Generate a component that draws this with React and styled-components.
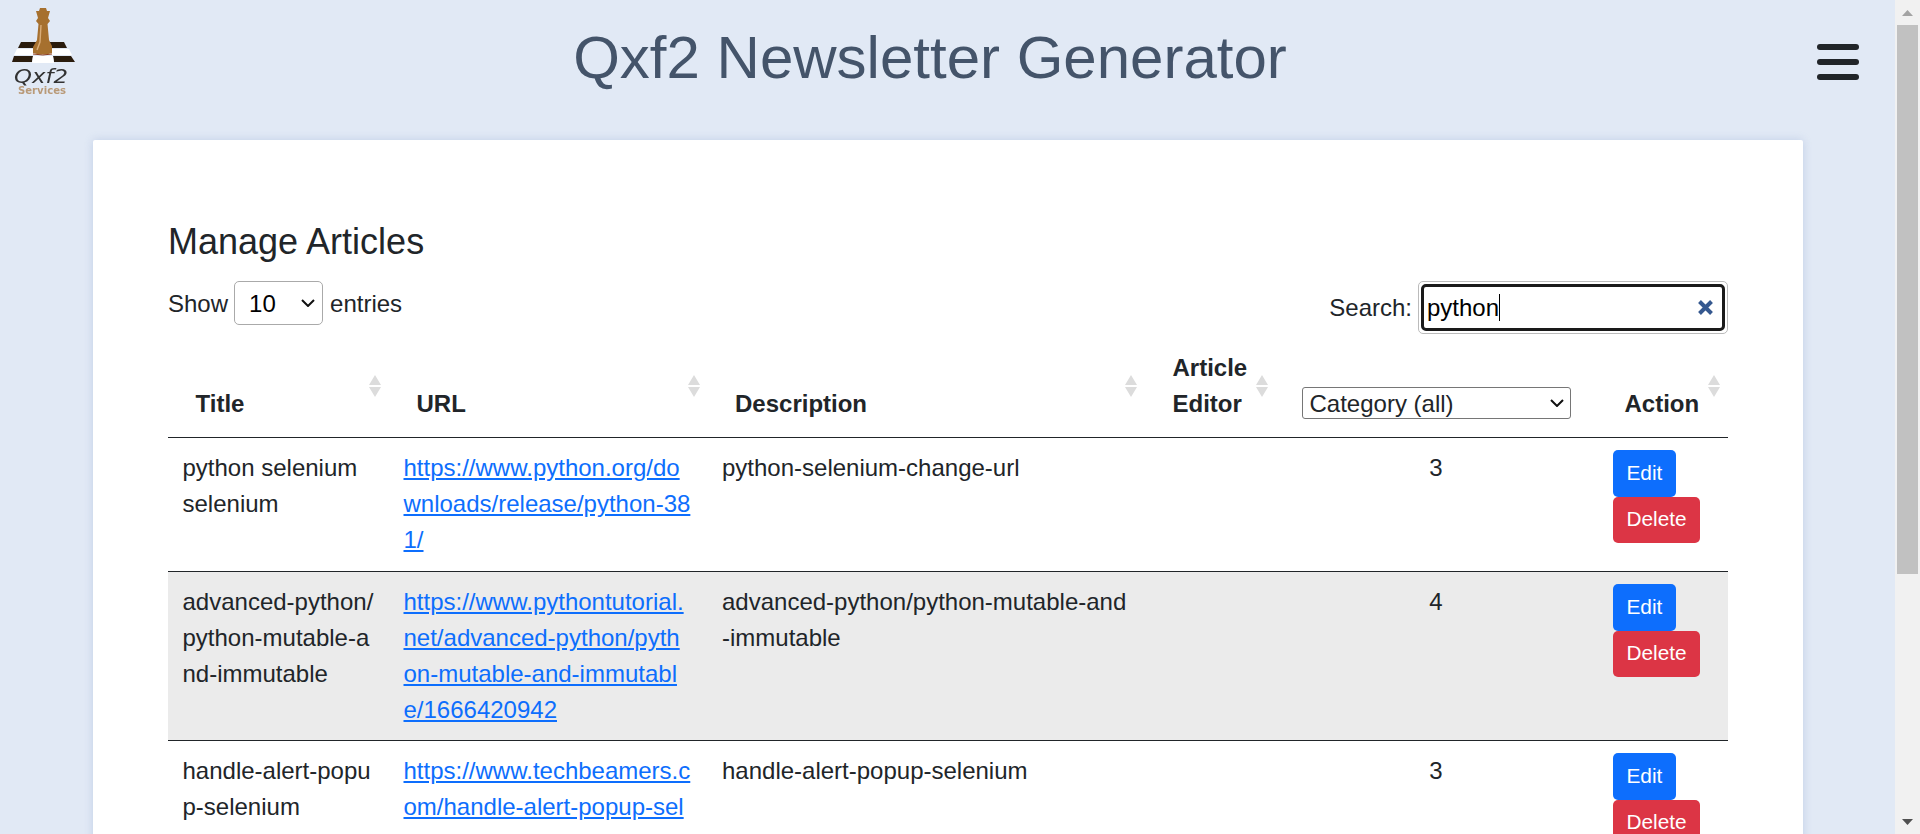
import React from "react";
import styled, { createGlobalStyle } from "styled-components";

const chevron = "url(\"data:image/svg+xml,%3Csvg xmlns='http://www.w3.org/2000/svg' width='14' height='8' viewBox='0 0 14 8'%3E%3Cpath d='M1 1 L7 7 L13 1' fill='none' stroke='%23111' stroke-width='2'/%3E%3C/svg%3E\")";

const Global = createGlobalStyle`
  html, body { margin: 0; height: 100%; overflow: hidden; }
  body { font-family: "Liberation Sans", Arial, sans-serif; color: #212529; background: #e1e9f5; }
`;

const Viewport = styled.div`display: flex; height: 100vh; overflow: hidden;`;
const Page = styled.div`flex: 1; min-width: 0; overflow: hidden; background: #e1e9f5;`;
const Header = styled.header`display: flex; align-items: flex-start; height: 140px;`;
const LogoBox = styled.div`flex: 0 0 85px; height: 100px;`;
const Title = styled.h1`
  flex: 1; margin: 22px 0 0; text-align: center; font-size: 60px; line-height: 72px;
  font-weight: 400; color: #44546a;
`;
const Burger = styled.div`
  flex: 0 0 auto; display: flex; flex-direction: column; gap: 9px; width: 42px;
  margin: 44px 36px 0 42px;
`;
const BurgerBar = styled.span`display: block; height: 6px; border-radius: 3px; background: #212529;`;

const Card = styled.main`
  margin: 0 92px 0 93px; padding: 75px 75px 40px; background: #fff;
  box-shadow: 0 0 8px rgba(120, 145, 200, .3); border-radius: 2px;
`;
const Heading = styled.h2`margin: 0 0 12px; font-size: 36px; line-height: 54px; font-weight: 400;`;
const Controls = styled.div`display: flex; justify-content: space-between; align-items: flex-start; height: 54px; font-size: 24px; line-height: 36px;`;
const ShowLabel = styled.label`display: flex; align-items: flex-start; gap: 6px; height: 44px; line-height: 46px;`;
const PageSize = styled.select`
  appearance: none; box-sizing: border-box; width: 89px; height: 44px; margin-right: 1px; padding: 0 0 0 14px;
  font: 24px "Liberation Sans", Arial, sans-serif; color: #000;
  background: #fff ${chevron} no-repeat right 7px center; border: 1px solid #aaa; border-radius: 5px;
`;
const SearchLabel = styled.label`display: flex; align-items: center; gap: 6px; height: 53px;`;
const SearchFrame = styled.div`
  box-sizing: border-box; width: 310px; height: 53px; padding: 2px; background: #fff;
  border: 1px solid #bbb; border-radius: 5px;
`;
const SearchBox = styled.div`
  display: flex; align-items: center; box-sizing: border-box; height: 47px;
  padding: 0 8px 0 3px; border: 3px solid #1a1a1a; border-radius: 5px; color: #000;
`;
const SearchValue = styled.span`line-height: 36px;`;
const Caret = styled.span`display: block; width: 1px; height: 27px; background: #000; margin-right: auto;`;
const ClearIcon = styled.svg`display: block; width: 17px; height: 17px;`;

const Table = styled.table`
  width: 1560px; table-layout: fixed; border-collapse: collapse; font-size: 24px; line-height: 36px;
  tbody tr:first-child td { padding-bottom: 13px; }
`;
const Col = styled.col`width: ${p => p.$w}px;`;
const Th = styled.th`
  position: relative; vertical-align: bottom; text-align: left; font-weight: 700;
  padding: 15px 14px 15px 27.5px; border-bottom: 1px solid #212529;
`;
const SortIcon = styled.svg`position: absolute; right: 8px; top: 50%; width: 12px; height: 22px; margin-top: -11px;`;
const CategorySelect = styled.select`
  appearance: none; display: block; width: 269px; height: 32px; box-sizing: border-box;
  font: 24px "Liberation Sans", Arial, sans-serif; color: #212529;
  background: #fff ${chevron} no-repeat right 6px center; border: 1px solid #767676; border-radius: 3px;
  padding: 0 0 0 7px; margin-bottom: 3px;
`;
const CategoryTh = styled(Th)`padding-left: 26px; padding-right: 25px;`;
const Row = styled.tr`background: ${p => (p.$striped ? "#ebebeb" : "#fff")};`;
const Td = styled.td`
  vertical-align: top; padding: 12px 15px 12px 14.5px; word-break: break-all; border-bottom: 1px solid #212529;
  text-align: ${p => (p.$center ? "center" : "left")};
`;
const ArticleLink = styled.a`color: #0d6efd; text-decoration: underline;`;
const Button = styled.button`
  display: block; box-sizing: border-box; height: 46.5px; margin-left: 1.5px; padding: 0 12.5px;
  font: 20.8px/1 "Liberation Sans", Arial, sans-serif;
  color: #fff; border: 1px solid transparent; border-radius: 5px; background: ${p => p.$bg};
`;

const Track = styled.aside`flex: 0 0 25px; display: flex; flex-direction: column; align-items: center; background: #f1f1f1; height: 100vh;`;
const ArrowBox = styled.div`flex: 0 0 25px; display: flex; justify-content: center; align-items: center;`;
const Thumb = styled.div`flex: 0 0 549px; width: 21px; background: #c1c1c1;`;
const Spacer = styled.div`flex: 1;`;
const ArrowGlyph = styled.svg`display: block; width: 11px; height: 6px;`;

const Sort = () => (
  <SortIcon viewBox="0 0 12 22" aria-hidden="true">
    <path d="M6 0 L12 10 H0 Z M0 12 H12 L6 22 Z" fill="#dcdcdc" />
  </SortIcon>
);

const Logo = () => (
  <svg width="85" height="100" viewBox="0 0 85 100" role="img" aria-label="Qxf2 Services">
    <defs><filter id="soft"><feGaussianBlur stdDeviation="0.45" /></filter></defs>
    <g filter="url(#soft)">
      <path d="M21 42 H64 L67 48 H18 Z" fill="#2b1a10" />
      <path d="M17 49 H69 L72 55 H14 Z" fill="#fff" />
      <path d="M14 56 H33 L32 62 H12 Z M53 56 H71 L75 62 H54 Z" fill="#2b1a10" />
      <path d="M33 56 H53 L54 63 H32 Z" fill="#fff" />
      <path d="M40 8 H46 L47 11 L50 11 L48 18 L50 21 L47.5 24 L49 40 L52 46 L52 53 Q43 56 33 53 L33 47 L37 40 L38.5 24 L36 21 L38 18 L36 11 L39 11 Z" fill="#a66f2f" />
      <path d="M41 25 L40 42 L37 50" stroke="#d9ad78" strokeWidth="1.4" fill="none" />
      <path d="M33 54 Q43 56 52 54" stroke="#8a3b1c" strokeWidth="1" fill="none" />
      <text x="14" y="83" fontFamily="'DejaVu Sans', sans-serif" fontStyle="italic" fontSize="19" textLength="54" lengthAdjust="spacingAndGlyphs" fill="#333">Qxf2</text>
      <text x="18" y="94" fontFamily="'DejaVu Sans', sans-serif" fontWeight="700" fontSize="10" textLength="48" lengthAdjust="spacingAndGlyphs" fill="#b99a78">Services</text>
    </g>
  </svg>
);

const rows = [
  { title: "python selenium selenium", url: "https://www.python.org/downloads/release/python-381/", desc: "python-selenium-change-url", cat: 3 },
  { title: "advanced-python/python-mutable-and-immutable", url: "https://www.pythontutorial.net/advanced-python/python-mutable-and-immutable/1666420942", desc: "advanced-python/python-mutable-and-immutable", cat: 4 },
  { title: "handle-alert-popup-selenium", url: "https://www.techbeamers.com/handle-alert-popup-selenium/", desc: "handle-alert-popup-selenium", cat: 3 },
];

export default function App() {
  return (
    <Viewport>
      <Global />
      <Page>
        <Header>
          <LogoBox><Logo /></LogoBox>
          <Title>Qxf2 Newsletter Generator</Title>
          <Burger><BurgerBar /><BurgerBar /><BurgerBar /></Burger>
        </Header>
        <Card>
          <Heading>Manage Articles</Heading>
          <Controls>
            <ShowLabel>
              Show
              <PageSize defaultValue="10">
                <option>10</option><option>25</option><option>50</option><option>100</option>
              </PageSize>
              entries
            </ShowLabel>
            <SearchLabel>
              Search:
              <SearchFrame>
                <SearchBox>
                  <SearchValue>python</SearchValue>
                  <Caret />
                  <ClearIcon viewBox="0 0 17 17" aria-hidden="true">
                    <path d="M2.5 2.5 L14.5 14.5 M14.5 2.5 L2.5 14.5" stroke="#35588f" strokeWidth="4" />
                  </ClearIcon>
                </SearchBox>
              </SearchFrame>
            </SearchLabel>
          </Controls>
          <Table>
            <colgroup>
              <Col $w={221} /><Col $w={318.5} /><Col $w={437.5} /><Col $w={130.5} /><Col $w={321.5} /><Col $w={131} />
            </colgroup>
            <thead>
              <tr>
                <Th>Title<Sort /></Th>
                <Th>URL<Sort /></Th>
                <Th>Description<Sort /></Th>
                <Th>Article Editor<Sort /></Th>
                <CategoryTh>
                  <CategorySelect defaultValue="all">
                    <option value="all">Category (all)</option>
                    <option value="3">3</option>
                    <option value="4">4</option>
                  </CategorySelect>
                </CategoryTh>
                <Th>Action<Sort /></Th>
              </tr>
            </thead>
            <tbody>
              {rows.map((r, i) => (
                <Row key={r.url} $striped={i % 2 === 1}>
                  <Td>{r.title}</Td>
                  <Td><ArticleLink href="#">{r.url}</ArticleLink></Td>
                  <Td>{r.desc}</Td>
                  <Td />
                  <Td $center>{r.cat}</Td>
                  <Td>
                    <Button $bg="#0d6efd">Edit</Button>
                    <Button $bg="#dc3545">Delete</Button>
                  </Td>
                </Row>
              ))}
            </tbody>
          </Table>
        </Card>
      </Page>
      <Track>
        <ArrowBox>
          <ArrowGlyph viewBox="0 0 11 6" aria-hidden="true"><path d="M5.5 0 L11 6 H0 Z" fill="#a3a3a3" /></ArrowGlyph>
        </ArrowBox>
        <Thumb />
        <Spacer />
        <ArrowBox>
          <ArrowGlyph viewBox="0 0 11 6" aria-hidden="true"><path d="M0 0 H11 L5.5 6 Z" fill="#505050" /></ArrowGlyph>
        </ArrowBox>
      </Track>
    </Viewport>
  );
}
